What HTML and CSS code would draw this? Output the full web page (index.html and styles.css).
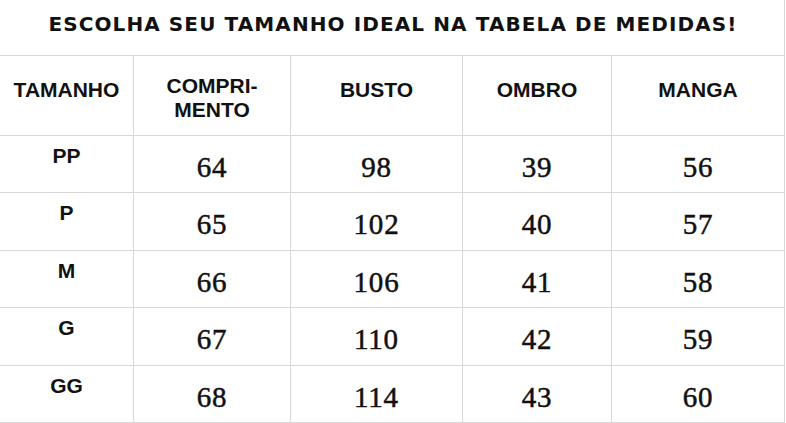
FILE: index.html
```html
<!DOCTYPE html>
<html lang="pt">
<head>
<meta charset="utf-8">
<title>Tabela de Medidas</title>
<link rel="stylesheet" href="styles.css">
</head>
<body>
<div class="chart">
  <div class="title">ESCOLHA SEU TAMANHO IDEAL NA TABELA DE MEDIDAS!</div>

  <div class="cell head">TAMANHO</div>
  <div class="cell head two">COMPRI-<br>MENTO</div>
  <div class="cell head">BUSTO</div>
  <div class="cell head">OMBRO</div>
  <div class="cell head">MANGA</div>

  <div class="cell size">PP</div>
  <div class="cell num">64</div>
  <div class="cell num">98</div>
  <div class="cell num">39</div>
  <div class="cell num">56</div>

  <div class="cell size">P</div>
  <div class="cell num">65</div>
  <div class="cell num">102</div>
  <div class="cell num">40</div>
  <div class="cell num">57</div>

  <div class="cell size">M</div>
  <div class="cell num">66</div>
  <div class="cell num">106</div>
  <div class="cell num">41</div>
  <div class="cell num">58</div>

  <div class="cell size">G</div>
  <div class="cell num">67</div>
  <div class="cell num">110</div>
  <div class="cell num">42</div>
  <div class="cell num">59</div>

  <div class="cell size">GG</div>
  <div class="cell num">68</div>
  <div class="cell num">114</div>
  <div class="cell num">43</div>
  <div class="cell num">60</div>
</div>
</body>
</html>
```
FILE: styles.css
```css
* { box-sizing: border-box; }
html, body { margin: 0; padding: 0; background: #fff; }
body { width: 786px; height: 423px; overflow: hidden; }

.chart {
  display: grid;
  grid-template-columns: 134px 157px 172px 149px 173px;
  grid-template-rows: 56px 80px 57px 58px 57px 58px 57px;
  width: 785px;
  color: #111;
}

.title {
  grid-column: 1 / -1;
  border-bottom: 1px solid #d8d8d8;
  border-right: 1px solid #d8d8d8;
  text-align: center;
  font-family: "DejaVu Sans", sans-serif;
  font-weight: bold;
  font-size: 20px;
  letter-spacing: 1.1px;
  line-height: 24px;
  padding-top: 12px;
  padding-left: 2px;
}

.cell {
  border-right: 1px solid #d8d8d8;
  border-bottom: 1px solid #d8d8d8;
  text-align: center;
}

.head {
  font-family: "Liberation Sans", Arial, sans-serif;
  font-weight: bold;
  font-size: 21px;
  line-height: 24px;
  padding-top: 22px;
}
.head.two { padding-top: 18px; }

.size {
  font-family: "Liberation Sans", Arial, sans-serif;
  font-weight: bold;
  font-size: 21px;
  line-height: 24px;
  padding-top: 8px;
}

.num {
  font-family: "Liberation Serif", "Times New Roman", serif;
  font-size: 29px;
  line-height: 32px;
  letter-spacing: 0.8px;
  padding-top: 15px;
  -webkit-text-stroke: 0.5px #111;
}
```
